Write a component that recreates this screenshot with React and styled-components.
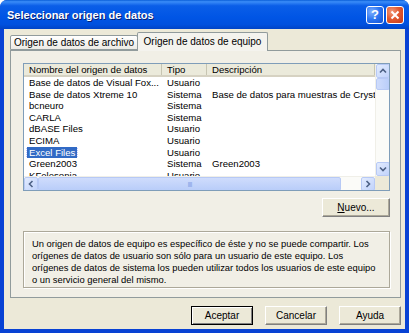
import React from 'react'
import styled, { createGlobalStyle } from 'styled-components'

const GlobalStyle = createGlobalStyle`
  body {
    margin: 0;
    background: #ffffff;
    font-family: "Liberation Sans", Arial, sans-serif;
    font-size: 10px;
    color: #000;
  }
`

const Ventana = styled.div`
  width: 409px;
  height: 333px;
  box-sizing: border-box;
  display: flex;
  flex-direction: column;
  border-radius: 7px 7px 0 0;
  background: #0842d4;
  overflow: hidden;
`

const BarraTitulo = styled.div`
  height: 29px;
  flex-shrink: 0;
  display: flex;
  align-items: center;
  padding: 0 5px 0 7px;
  background: linear-gradient(to bottom, #0a5fd8 0%, #3a8cf8 6%, #0a5ee8 20%, #0055e5 60%, #0050de 85%, #0043c6 100%);
`

const Titulo = styled.div`
  flex: 1;
  color: #ffffff;
  font-weight: bold;
  font-size: 11px;
  text-shadow: 1px 1px 0 #0a1e6e;
`

const BotonTitulo = styled.div`
  width: 18px;
  height: 18px;
  box-sizing: border-box;
  border: 1px solid #ffffff;
  border-radius: 3px;
  margin-left: 2px;
  display: flex;
  align-items: center;
  justify-content: center;
  color: #ffffff;
  font-weight: bold;
  font-size: 13px;
  background: ${p => p.$rojo
    ? 'radial-gradient(circle at 30% 30%, #f19b7c 0%, #e25a30 45%, #c5391a 100%)'
    : 'radial-gradient(circle at 30% 30%, #7fb0ff 0%, #2b74f0 50%, #1552d6 100%)'};
`

const Cuerpo = styled.div`
  flex: 1;
  margin: 0 4px 4px 4px;
  background: #ece9d8;
  padding: 3px 4px 0 6px;
  display: flex;
  flex-direction: column;
`

const Pestanas = styled.div`
  display: flex;
  align-items: flex-end;
  height: 18px;
  position: relative;
  z-index: 1;
`

const Pestana = styled.div`
  box-sizing: border-box;
  height: ${p => (p.$activa ? '19px' : '15px')};
  margin-bottom: ${p => (p.$activa ? '-1px' : '0')};
  width: ${p => p.$ancho}px;
  margin-left: ${p => (p.$activa ? '-1px' : '0')};
  border: 1px solid #919b9c;
  border-bottom: ${p => (p.$activa ? 'none' : '1px solid #919b9c')};
  border-radius: 2px 2px 0 0;
  background: ${p => (p.$activa ? '#f4f3ee' : 'linear-gradient(#ffffff, #ecebe5)')};
  display: flex;
  align-items: center;
  justify-content: center;
  padding-bottom: ${p => (p.$activa ? '2px' : '0')};
  font-size: 10px;
`

const Panel = styled.div`
  box-sizing: border-box;
  height: 248px;
  border: 1px solid #919b9c;
  background: #f1efe6;
  padding: 12px 10px 0 12px;
  display: flex;
  flex-direction: column;
`

const Lista = styled.div`
  box-sizing: border-box;
  height: 128px;
  border: 1px solid #7f9db9;
  background: #ffffff;
  display: grid;
  grid-template-columns: 1fr 14px;
  grid-template-rows: 1fr 14px;
  overflow: hidden;
  font-size: 9.6px;
`

const AreaFilas = styled.div`
  overflow: hidden;
  display: flex;
  flex-direction: column;
`

const Cabecera = styled.div`
  display: grid;
  grid-template-columns: 138px 45px 1fr;
  height: 13px;
  flex-shrink: 0;
  background: #ebeadb;
  border-bottom: 2px solid #d6d2c2;
  box-sizing: border-box;
`

const Columna = styled.div`
  padding-left: 5px;
  line-height: 11px;
  border-right: 1px solid #c7c5b2;
  white-space: nowrap;
  overflow: hidden;
`

const Fila = styled.div`
  display: grid;
  grid-template-columns: 138px 45px 1fr;
  height: 11.6px;
  line-height: 11.6px;
  flex-shrink: 0;
  &:first-of-type {
    margin-top: 2px;
  }
`

const Celda = styled.div`
  padding-left: ${p => (p.$sel ? '3px' : '5px')};
  white-space: nowrap;
  overflow: hidden;
`

const Seleccion = styled.span`
  background: #316ac5;
  color: #ffffff;
  outline: 1px dotted #c0c8ff;
  padding: 0 2px;
`

const BarraV = styled.div`
  display: flex;
  flex-direction: column;
  background: #fbfbf8;
  border-left: 1px solid #f0efe8;
`

const BarraH = styled.div`
  display: flex;
  background: #fbfbf8;
  border-top: 1px solid #f0efe8;
`

const Esquina = styled.div`
  background: #ece9d8;
`

const Flecha = styled.div`
  width: 14px;
  height: 14px;
  box-sizing: border-box;
  border: 1px solid #b7c9f5;
  border-radius: 2px;
  background: linear-gradient(135deg, #e2ebfe, #c1d3fb);
  display: flex;
  align-items: center;
  justify-content: center;
  flex-shrink: 0;
`

const Pulgar = styled.div`
  box-sizing: border-box;
  border: 1px solid #b7c9f5;
  border-radius: 2px;
  background: ${p => (p.$h ? 'linear-gradient(#cfdcfc, #b9cdf9)' : 'linear-gradient(90deg, #cfdcfc, #b9cdf9)')};
  ${p => (p.$h ? 'width: 303px; height: 14px;' : 'height: 12px; width: 14px;')}
  display: flex;
  align-items: center;
  justify-content: center;
  color: #8aa7e6;
  font-size: 7px;
  letter-spacing: -1px;
`

const Relleno = styled.div`
  flex: 1;
`

const FilaBoton = styled.div`
  display: flex;
  justify-content: flex-end;
  margin-top: ${p => p.$arriba}px;
`

const Boton = styled.div`
  box-sizing: border-box;
  width: ${p => p.$ancho || 62}px;
  height: 19px;
  background: #ece9d8;
  border: 1px solid ${p => (p.$defecto ? '#000000' : '#808080')};
  border-top-color: ${p => (p.$defecto ? '#000000' : '#ffffff')};
  border-left-color: ${p => (p.$defecto ? '#000000' : '#ffffff')};
  box-shadow: ${p => (p.$defecto ? 'inset 1px 1px 0 #ffffff, inset -1px -1px 0 #808080' : 'inset -1px -1px 0 #aca899')};
  display: flex;
  align-items: center;
  justify-content: center;
  font-size: 10px;
`

const Info = styled.div`
  box-sizing: border-box;
  margin-top: 14px;
  height: 57px;
  border: 1px solid #aca899;
  box-shadow: inset 1px 1px 0 #ffffff, 1px 1px 0 #ffffff;
  padding: 6px 6px 0 8px;
  line-height: 12px;
  font-size: 9.4px;
  white-space: nowrap;
  overflow: hidden;
`

const Pie = styled.div`
  display: flex;
  justify-content: flex-end;
  gap: 12px;
  margin-top: 8px;
`

const Chevron = ({ dir }) => {
  const rot = { up: 0, down: 180, left: 270, right: 90 }[dir]
  return (
    <svg width="8" height="6" viewBox="0 0 8 6" style={{ transform: `rotate(${rot}deg)` }}>
      <path d="M1 4.5 L4 1.5 L7 4.5" fill="none" stroke="#4d6185" strokeWidth="1.6" />
    </svg>
  )
}

const filas = [
  ['Base de datos de Visual Fox...', 'Usuario', ''],
  ['Base de datos Xtreme 10', 'Sistema', 'Base de datos para muestras de Crystal Reports'],
  ['bcneuro', 'Sistema', ''],
  ['CARLA', 'Sistema', ''],
  ['dBASE Files', 'Usuario', ''],
  ['ECIMA', 'Usuario', ''],
  ['Excel Files', 'Usuario', '', true],
  ['Green2003', 'Sistema', 'Green2003'],
  ['KFelesonia', 'Usuario', ''],
]

export default function App() {
  return (
    <>
      <GlobalStyle />
      <Ventana>
        <BarraTitulo>
          <Titulo>Seleccionar origen de datos</Titulo>
          <BotonTitulo>?</BotonTitulo>
          <BotonTitulo $rojo>
            <svg width="10" height="10" viewBox="0 0 10 10">
              <path d="M1.5 1.5 L8.5 8.5 M8.5 1.5 L1.5 8.5" stroke="#fff" strokeWidth="2" />
            </svg>
          </BotonTitulo>
        </BarraTitulo>
        <Cuerpo>
          <Pestanas>
            <Pestana $ancho={128}>Origen de datos de archivo</Pestana>
            <Pestana $activa $ancho={131}>Origen de datos de equipo</Pestana>
          </Pestanas>
          <Panel>
            <Lista>
              <AreaFilas>
                <Cabecera>
                  <Columna>Nombre del origen de datos</Columna>
                  <Columna>Tipo</Columna>
                  <Columna>Descripción</Columna>
                </Cabecera>
                {filas.map(([n, t, d, sel]) => (
                  <Fila key={n}>
                    <Celda $sel={sel}>{sel ? <Seleccion>{n}</Seleccion> : n}</Celda>
                    <Celda>{t}</Celda>
                    <Celda>{d}</Celda>
                  </Fila>
                ))}
              </AreaFilas>
              <BarraV>
                <Flecha><Chevron dir="up" /></Flecha>
                <Pulgar />
                <Relleno />
                <Flecha><Chevron dir="down" /></Flecha>
              </BarraV>
              <BarraH>
                <Flecha><Chevron dir="left" /></Flecha>
                <Pulgar $h>IIII</Pulgar>
                <Relleno />
                <Flecha><Chevron dir="right" /></Flecha>
              </BarraH>
              <Esquina />
            </Lista>
            <FilaBoton $arriba={7}>
              <Boton $ancho={68}><span><u>N</u>uevo...</span></Boton>
            </FilaBoton>
            <Info>
              Un origen de datos de equipo es específico de éste y no se puede compartir. Los<br />
              orígenes de datos de usuario son sólo para un usuario de este equipo. Los<br />
              orígenes de datos de sistema los pueden utilizar todos los usuarios de este equipo<br />
              o un servicio general del mismo.
            </Info>
          </Panel>
          <Pie>
            <Boton $defecto>Aceptar</Boton>
            <Boton>Cancelar</Boton>
            <Boton>Ayuda</Boton>
          </Pie>
        </Cuerpo>
      </Ventana>
    </>
  )
}
